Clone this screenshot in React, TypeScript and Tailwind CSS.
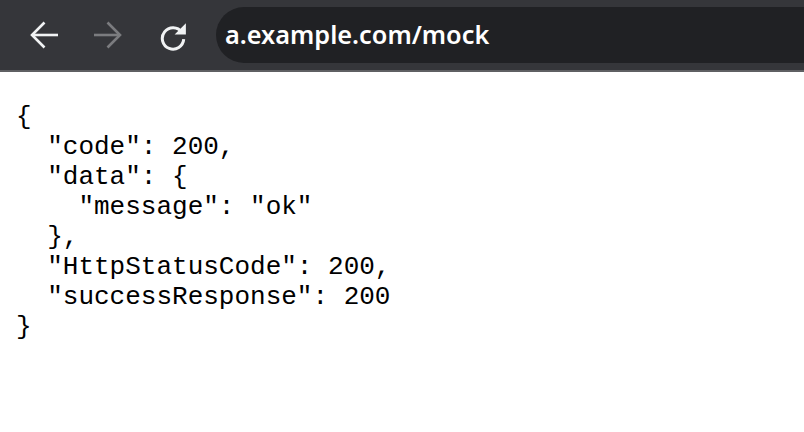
import React from "react";

const json = `{
  "code": 200,
  "data": {
    "message": "ok"
  },
  "HttpStatusCode": 200,
  "successResponse": 200
}`;

export default function App() {
  return (
    <div className="w-[804px] h-[432px] bg-white overflow-hidden">
      <div className="h-[72px] bg-[#35363a] border-b-2 border-[#5f6063] flex items-center">
        <div className="w-[216px] flex items-center shrink-0">
          <svg className="ml-[30px]" width="28" height="28" viewBox="0 0 28 28" fill="none" stroke="#f1f3f4" strokeWidth="2.6" strokeLinecap="butt">
            <path d="M2 14H28" />
            <path d="M14.5 1.5L2 14L14.5 26.5" />
          </svg>
          <svg className="ml-[36px]" width="28" height="28" viewBox="0 0 28 28" fill="none" stroke="#7b7c7f" strokeWidth="2.6">
            <path d="M0 14H26" />
            <path d="M13.5 1.5L26 14L13.5 26.5" />
          </svg>
          <svg className="ml-[36px] mt-[2px]" width="30" height="30" viewBox="0 0 28 28" fill="none">
            <path d="M22.2 10.5A10 10 0 1 0 24 17" stroke="#f1f3f4" strokeWidth="2.8" fill="none" />
            <path d="M15.5 12.5H26V2Z" fill="#f1f3f4" />
          </svg>
        </div>
        <div className="flex-1 h-[56px] bg-[#202124] rounded-l-[28px] mr-[-40px] flex items-center pl-[9px]">
          <span className="text-white text-[25.3px] font-semibold font-['Noto_Sans',sans-serif]">a.example.com/mock</span>
        </div>
      </div>
      <pre className="m-0 pl-[16px] pt-[30px] text-[26px] leading-[30px] text-black font-['Liberation_Mono',monospace]">{json}</pre>
    </div>
  );
}
